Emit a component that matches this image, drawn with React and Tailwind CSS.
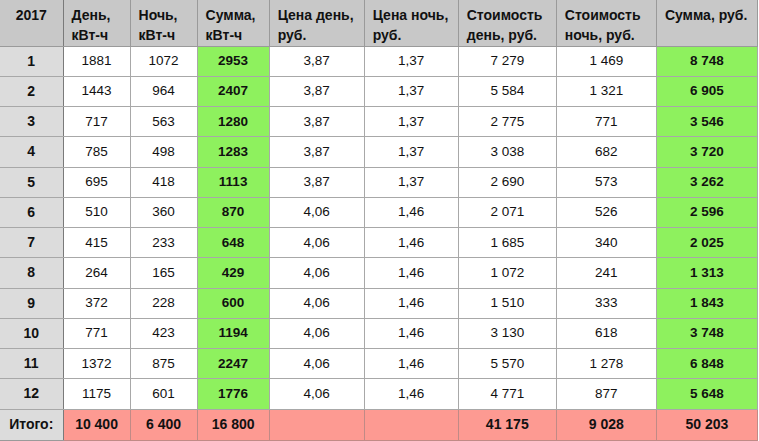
import React from "react";

const rows = [
  [1, 1881, 1072, 2953, "3,87", "1,37", "7 279", "1 469", "8 748"],
  [2, 1443, 964, 2407, "3,87", "1,37", "5 584", "1 321", "6 905"],
  [3, 717, 563, 1280, "3,87", "1,37", "2 775", "771", "3 546"],
  [4, 785, 498, 1283, "3,87", "1,37", "3 038", "682", "3 720"],
  [5, 695, 418, 1113, "3,87", "1,37", "2 690", "573", "3 262"],
  [6, 510, 360, 870, "4,06", "1,46", "2 071", "526", "2 596"],
  [7, 415, 233, 648, "4,06", "1,46", "1 685", "340", "2 025"],
  [8, 264, 165, 429, "4,06", "1,46", "1 072", "241", "1 313"],
  [9, 372, 228, 600, "4,06", "1,46", "1 510", "333", "1 843"],
  [10, 771, 423, 1194, "4,06", "1,46", "3 130", "618", "3 748"],
  [11, 1372, 875, 2247, "4,06", "1,46", "5 570", "1 278", "6 848"],
  [12, 1175, 601, 1776, "4,06", "1,46", "4 771", "877", "5 648"],
];

const widths = [63, 67, 67, 72, 95, 94, 98, 100, 101];
const headers = [
  "2017",
  ["День,", "кВт-ч"],
  ["Ночь,", "кВт-ч"],
  ["Сумма,", "кВт-ч"],
  ["Цена день,", "руб."],
  ["Цена ночь,", "руб."],
  ["Стоимость", "день, руб."],
  ["Стоимость", "ночь, руб."],
  ["Сумма, руб."],
];
const totals = ["Итого:", "10 400", "6 400", "16 800", "", "", "41 175", "9 028", "50 203"];

export default function App() {
  return (
    <div
      className="w-[759px] h-[441px] bg-white overflow-hidden text-[#111]"
      style={{ fontFamily: '"Liberation Sans", Arial, sans-serif' }}
    >
      <table className="border-collapse table-fixed w-[758px]">
        <colgroup>
          {widths.map((w, i) => (
            <col key={i} style={{ width: w }} />
          ))}
        </colgroup>
        <thead>
          <tr className="h-[46px] bg-[#c8c8c8]">
            {headers.map((h, i) => (
              <th
                key={i}
                className={
                  "align-top pt-[5px] text-[14px] leading-[20px] font-bold border-b border-[#9a9a9a] " +
                  (i === 0
                    ? "text-center border-r border-r-[#7a7a7a]"
                    : "text-left pl-[8px] border-r border-[#9a9a9a]")
                }
              >
                {Array.isArray(h) ? h.map((l, j) => <div key={j}>{l}</div>) : h}
              </th>
            ))}
          </tr>
        </thead>
        <tbody>
          {rows.map((r, ri) => (
            <tr key={ri} className="h-[30.25px]">
              {r.map((v, ci) => (
                <td
                  key={ci}
                  className={
                    "text-center text-[13.5px] border-b border-[#a8a8a8] " +
                    (ci === 0
                      ? "bg-[#dcdcdc] font-bold text-[14px] border-r border-r-[#7a7a7a]"
                      : ci === 3 || ci === 8
                      ? "bg-[#8ef15e] font-bold border-r border-[#a8a8a8]"
                      : "bg-white border-r border-[#a8a8a8]")
                  }
                >
                  {v}
                </td>
              ))}
            </tr>
          ))}
          <tr className="h-[31px]">
            {totals.map((v, ci) => (
              <td
                key={ci}
                className={
                  "text-center text-[14px] font-bold border-b border-[#9a9a9a] " +
                  (ci === 0
                    ? "bg-[#dcdcdc] border-r border-r-[#7a7a7a]"
                    : "bg-[#fd9a92] border-r border-[#c08a86]")
                }
              >
                {v}
              </td>
            ))}
          </tr>
        </tbody>
      </table>
    </div>
  );
}
